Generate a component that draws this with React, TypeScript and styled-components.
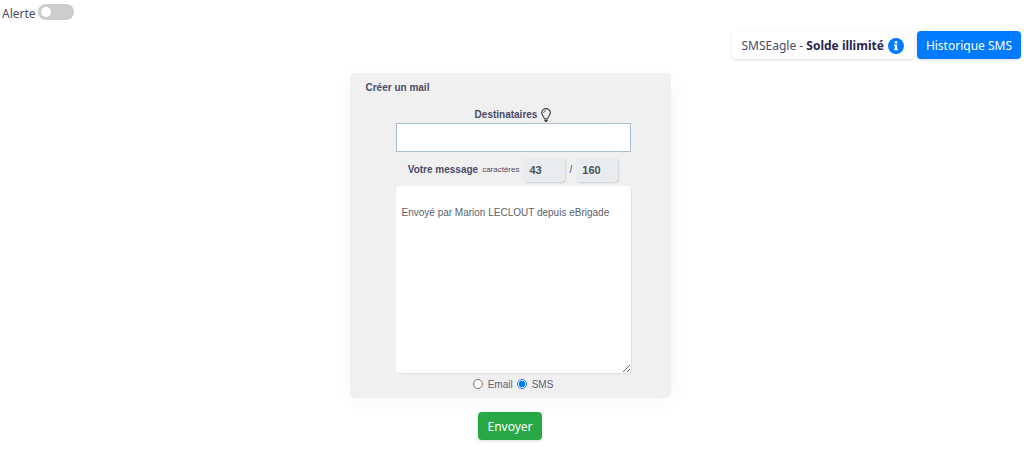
import React, { useState } from "react";
import styled, { createGlobalStyle } from "styled-components";

const GlobalStyle = createGlobalStyle`
  *, *::before, *::after { box-sizing: border-box; }
  body {
    margin: 0;
    background: #fff;
    color: #4b4b68;
    font-family: "Segoe UI", "Noto Sans", sans-serif;
    font-size: 12px;
    line-height: 18px;
  }
  button, input, textarea { font: inherit; color: inherit; margin: 0; }
`;

const Page = styled.main`
  display: flex;
  flex-direction: column;
`;

const AlertSwitch = styled.label`
  display: flex;
  align-items: flex-start;
  align-self: flex-start;
  gap: 2px;
  padding: 4px 2px 0;
`;

const AlertText = styled.span`
  padding-top: 1px;
`;

const Switch = styled.input`
  appearance: none;
  display: flex;
  align-items: center;
  width: 36px;
  height: 16px;
  padding: 0 3px;
  border-radius: 8px;
  background: #ccc;
  cursor: pointer;

  &::before {
    content: "";
    width: 10px;
    height: 10px;
    border-radius: 50%;
    background: #fff;
  }
  &:checked { justify-content: flex-end; background: #007bff; }
`;

const Toolbar = styled.div`
  display: flex;
  justify-content: flex-end;
  gap: 3px;
  padding: 8px 3px 0;
`;

const Button = styled.button<{ $tone: "white" | "blue" | "green" }>`
  display: flex;
  align-items: center;
  gap: 4px;
  height: 28px;
  padding: 1px ${(p) => ({ white: 10, blue: 9, green: 9 })[p.$tone]}px 0;
  border: 0;
  border-radius: 4px;
  white-space: nowrap;
  cursor: pointer;
  color: ${(p) => (p.$tone === "white" ? "#4b4b68" : "#fff")};
  background: ${(p) => ({ white: "#fff", blue: "#007bff", green: "#28a745" })[p.$tone]};
  box-shadow: 0 1px 3px rgba(0, 0, 0, 0.14);

  strong { color: #2b2450; }
`;

const Form = styled.form`
  display: flex;
  flex-direction: column;
  align-items: center;
  gap: 14px;
  padding: 14px 4px 16px 0;
`;

const Card = styled.section`
  display: flex;
  flex-direction: column;
  width: 100%;
  max-width: 321px;
  padding: 7px 16px 5px;
  border-radius: 5px;
  background: #f0f0f0;
  box-shadow: 0 4px 24px rgba(0, 0, 0, 0.04);
  font-family: "Liberation Sans", Arial, sans-serif;
  font-size: 10px;
  line-height: 16px;
`;

const Title = styled.h1`
  margin: 0;
  font-size: 10px;
  line-height: 16px;
`;

const Fields = styled.div`
  display: flex;
  flex-direction: column;
  padding: 11px 24px 0 30px;
`;

const FieldHead = styled.div`
  display: flex;
  align-items: center;
  justify-content: center;
  gap: 4px;
  height: 16px;
`;

const FieldLabel = styled.label`
  font-weight: bold;
`;

const Recipients = styled.input`
  width: 100%;
  height: 29px;
  padding: 0 6px;
  border: 1px solid #aebbd6;
  background: #fff;
`;

const CounterRow = styled(FieldHead)`
  height: 24px;
  margin: 6px 0 4px;
`;

const Small = styled.small`
  font-size: 8px;
`;

const Counter = styled.input`
  width: 42px;
  height: 24px;
  padding: 0 6px;
  border: 0;
  border-radius: 4px;
  background: #e9ecef;
  color: #495057;
  font-size: 11px;
  font-weight: bold;
  box-shadow: 1px 1px 2px rgba(0, 0, 0, 0.14);
`;

const Message = styled.textarea`
  width: 100%;
  height: 187px;
  padding: 19px 6px 6px;
  border: 0;
  border-radius: 4px;
  background: #fff;
  color: #5d6068;
  resize: vertical;
  box-shadow: 1px 1px 1px rgba(0, 0, 0, 0.08);
`;

const Choices = styled.div`
  display: flex;
  justify-content: center;
  gap: 4px;
  padding-top: 4px;
`;

const Choice = styled.label`
  display: flex;
  align-items: flex-start;
  gap: 5px;
  color: #5d6078;
`;

const Radio = styled.input`
  appearance: none;
  width: 10px;
  height: 10px;
  margin-top: 2px;
  border: 1px solid #777;
  border-radius: 50%;
  background: #fff;

  &:checked {
    border-color: #007bff;
    background: radial-gradient(circle, #007bff 0 3px, #fff 3px);
  }
`;

const InfoIcon = () => (
  <svg width="16" height="16" viewBox="0 0 16 16" aria-hidden="true">
    <circle cx="8" cy="8" r="8" fill="#007bff" />
    <circle cx="8" cy="4.3" r="1.4" fill="#fff" />
    <path d="M6 6.6h3.1v4.2H10v1.5H6v-1.5h.9V8.1H6z" fill="#fff" />
  </svg>
);

const BulbIcon = () => (
  <svg width="10" height="14" viewBox="0 0 10 14" fill="none" stroke="#3f4050" aria-hidden="true">
    <path d="M3.2 10.4C3.2 8.6.7 7.6.7 4.8a4.3 4.2 0 0 1 8.6 0C9.3 7.6 6.8 8.6 6.8 10.4" strokeWidth="1.2" />
    <path d="M2.7 5A2.3 2.3 0 0 1 5 2.7" strokeWidth=".8" />
    <path d="M3 10.8h4M3 12.2h4M4 13.4h2" strokeWidth="1.1" />
  </svg>
);

export default function App() {
  const [message, setMessage] = useState("Envoyé par Marion LECLOUT depuis eBrigade");
  const [kind, setKind] = useState("sms");

  return (
    <Page>
      <GlobalStyle />
      <AlertSwitch>
        <AlertText>Alerte</AlertText>
        <Switch type="checkbox" role="switch" />
      </AlertSwitch>
      <Toolbar>
        <Button type="button" $tone="white">
          <span>SMSEagle - <strong>Solde illimité</strong></span>
          <InfoIcon />
        </Button>
        <Button type="button" $tone="blue">Historique SMS</Button>
      </Toolbar>
      <Form onSubmit={(e) => e.preventDefault()}>
        <Card>
          <Title>Créer un mail</Title>
          <Fields>
            <FieldHead>
              <FieldLabel htmlFor="recipients">Destinataires</FieldLabel>
              <BulbIcon />
            </FieldHead>
            <Recipients id="recipients" type="text" />
            <CounterRow>
              <FieldLabel htmlFor="message">Votre message</FieldLabel>
              <Small>caractères</Small>
              <Counter aria-label="Caractères saisis" readOnly value={message.length + 2} />
              <span>/</span>
              <Counter aria-label="Caractères maximum" readOnly value="160" />
            </CounterRow>
            <Message id="message" value={message} onChange={(e) => setMessage(e.target.value)} />
            <Choices>
              <Choice>
                <Radio type="radio" name="kind" checked={kind === "email"} onChange={() => setKind("email")} />
                Email
              </Choice>
              <Choice>
                <Radio type="radio" name="kind" checked={kind === "sms"} onChange={() => setKind("sms")} />
                SMS
              </Choice>
            </Choices>
          </Fields>
        </Card>
        <Button type="submit" $tone="green">Envoyer</Button>
      </Form>
    </Page>
  );
}
